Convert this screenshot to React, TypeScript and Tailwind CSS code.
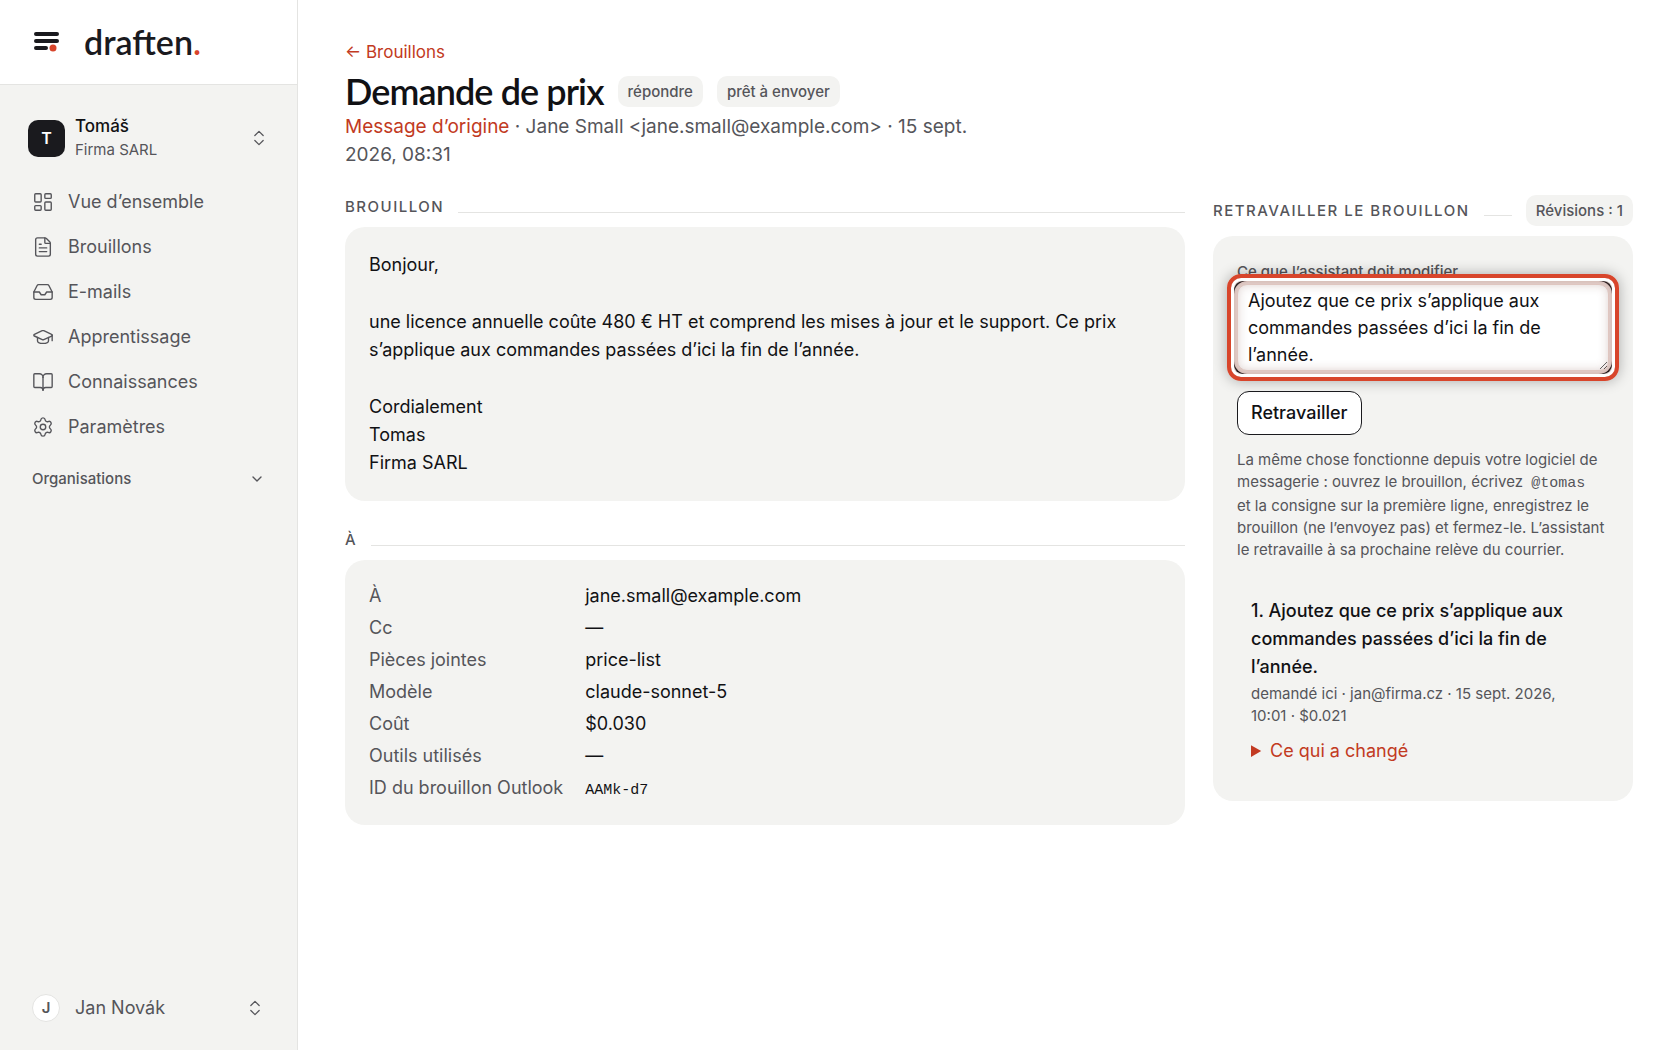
import {
  BookOpen,
  ChevronDown,
  ChevronsUpDown,
  FileText,
  GraduationCap,
  Inbox,
  LayoutDashboard,
  Settings,
} from "lucide-react";
import type { ReactNode } from "react";

const navItems = [
  { label: "Vue d’ensemble", icon: LayoutDashboard },
  { label: "Brouillons", icon: FileText },
  { label: "E-mails", icon: Inbox },
  { label: "Apprentissage", icon: GraduationCap },
  { label: "Connaissances", icon: BookOpen },
  { label: "Paramètres", icon: Settings },
];

const details = [
  { label: "À", value: "jane.small@example.com" },
  { label: "Cc", value: "—" },
  { label: "Pièces jointes", value: "price-list" },
  { label: "Modèle", value: "claude-sonnet-5" },
  { label: "Coût", value: "$0.030" },
  { label: "Outils utilisés", value: "—" },
  { label: "ID du brouillon Outlook", value: "AAMk-d7", mono: true },
];

function Logo() {
  return (
    <a href="#" className="flex items-center gap-6">
      <svg width="28" height="22" viewBox="0 0 28 22" fill="none">
        <path d="M4 3h21M4 10h21M4 17h10" stroke="#1a1a1e" strokeWidth="4" strokeLinecap="round" />
        <circle cx="21" cy="17" r="3.5" fill="#d8452b" />
      </svg>
      <span className="font-['Lato',sans-serif] text-[34px] leading-10 font-semibold text-[#1a1a1e]">
        draften<span className="text-[#d8452b]">.</span>
      </span>
    </a>
  );
}

function Sidebar() {
  return (
    <aside className="flex w-[298px] shrink-0 flex-col border-r border-[#e4e4e2] bg-[#f3f3f1]">
      <div className="flex h-[85px] items-center border-b border-[#e4e4e2] bg-white px-8">
        <Logo />
      </div>

      <button className="mx-7 mt-[29px] flex items-center gap-2.5 text-left">
        <span className="flex size-[37px] items-center justify-center rounded-[10px] bg-[#1a1a1e] text-base font-semibold text-white">
          T
        </span>
        <span className="flex-1">
          <span className="block text-[17px] leading-6 font-medium text-[#111114]">Tomáš</span>
          <span className="block text-[15px] leading-6 text-[#55555a]">Firma SARL</span>
        </span>
        <ChevronsUpDown className="size-5 text-[#55555a]" strokeWidth={1.5} />
      </button>

      <nav className="mt-[17px] flex flex-col px-8">
        {navItems.map(({ label, icon: Icon }) => (
          <a key={label} href="#" className="flex h-[45px] items-center gap-3.5 text-lg text-[#55555a]">
            <Icon className="size-[22px]" strokeWidth={1.5} />
            {label}
          </a>
        ))}
      </nav>

      <button className="mx-8 mt-[18px] flex items-center justify-between text-[15px] leading-6 font-medium text-[#55555a]">
        Organisations
        <ChevronDown className="size-4" />
      </button>

      <button className="mx-8 mt-auto mb-7 flex items-center gap-[15px] text-lg leading-7 text-[#55555a]">
        <span className="flex size-7 items-center justify-center rounded-full border border-[#e4e4e2] bg-white text-[15px] font-semibold">
          J
        </span>
        <span className="flex-1 text-left">Jan Novák</span>
        <ChevronsUpDown className="size-5" strokeWidth={1.5} />
      </button>
    </aside>
  );
}

function Badge({ children }: { children: ReactNode }) {
  return (
    <span className="rounded-[10px] bg-[#f3f3f1] px-2.5 py-1 text-[15px] leading-[23px] font-medium whitespace-nowrap text-[#55555a]">
      {children}
    </span>
  );
}

function SectionTitle({ children, badge }: { children: ReactNode; badge?: ReactNode }) {
  return (
    <div className="flex items-center gap-3.5">
      <h2 className="text-[15px] leading-6 font-medium tracking-widest whitespace-nowrap text-[#55555a] uppercase">
        {children}
      </h2>
      <div className="mt-2.5 h-px flex-1 bg-[#e4e4e2]" />
      {badge}
    </div>
  );
}

function DraftColumn() {
  return (
    <div className="flex flex-col">
      <SectionTitle>Brouillon</SectionTitle>
      <div className="mt-2 space-y-[29px] rounded-[20px] bg-[#f3f3f1] p-6 text-lg leading-7">
        <p>Bonjour,</p>
        <p>
          une licence annuelle coûte 480 € HT et comprend les mises à jour et le support. Ce prix s’applique
          aux commandes passées d’ici la fin de l’année.
        </p>
        <p>
          Cordialement
          <br />
          Tomas
          <br />
          Firma SARL
        </p>
      </div>

      <div className="mt-[27px]">
        <SectionTitle>À</SectionTitle>
      </div>
      <dl className="mt-2 grid grid-cols-[max-content_1fr] items-baseline gap-x-[22px] gap-y-1 rounded-[20px] bg-[#f3f3f1] px-6 pt-[22px] pb-5 text-lg leading-7">
        {details.map(({ label, value, mono }) => (
          <div key={label} className="contents">
            <dt className="text-[#55555a]">{label}</dt>
            <dd className={mono ? "font-['Liberation_Mono',monospace] text-[15px]" : ""}>{value}</dd>
          </div>
        ))}
      </dl>
    </div>
  );
}

function ReworkColumn() {
  return (
    <div>
      <SectionTitle badge={<Badge>Révisions : 1</Badge>}>Retravailler le brouillon</SectionTitle>
      <div className="mt-2.5 rounded-[20px] bg-[#f3f3f1] px-6 pt-6 pb-9">
        <label htmlFor="instruction" className="block text-[15px] leading-6 font-medium text-[#55555a]">
          Ce que l’assistant doit modifier
        </label>
        <div className="relative rounded-md shadow-[0_0_0_3px_#1a1a1e]">
          <textarea
            id="instruction"
            rows={3}
            className="block w-full rounded-[10px] border border-[#f0dcd7] bg-white px-2.5 py-0.5 text-lg leading-[27px] shadow-[0_0_0_3px_#f3e4e0]"
            defaultValue="Ajoutez que ce prix s’applique aux commandes passées d’ici la fin de l’année."
          />
          {/* focus highlight around the field */}
          <div className="pointer-events-none absolute -inset-2.5 rounded-[14px] border-4 border-[#d8452b] shadow-[0_0_14px_rgba(0,0,0,0.3),inset_0_0_0_3px_#fff,inset_0_0_12px_5px_rgba(100,40,30,0.3)]" />
        </div>
        <button className="mt-5 rounded-xl border border-[#1a1a1e] bg-white px-[13px] py-2 text-lg leading-[26px] font-medium">
          Retravailler
        </button>
        <p className="mt-3.5 text-[15px] leading-[22px] text-[#55555a]">
          La même chose fonctionne depuis votre logiciel de messagerie : ouvrez le brouillon, écrivez{" "}
          <code className="pr-2 pl-1 font-['Liberation_Mono',monospace] text-[15px]">@tomas</code> et la
          consigne sur la première ligne, enregistrez le brouillon (ne l’envoyez pas) et fermez-le.
          L’assistant le retravaille à sa prochaine relève du courrier.
        </p>
        <ol className="mt-9 px-3.5">
          <li>
            <p className="text-lg leading-7 font-medium">
              1. Ajoutez que ce prix s’applique aux commandes passées d’ici la fin de l’année.
            </p>
            <p className="mt-0.5 text-[15px] leading-[22px] text-[#55555a]">
              demandé ici · jan@firma.cz · 15 sept. 2026, 10:01 · $0.021
            </p>
            <details className="mt-2.5 text-lg leading-7">
              <summary className="text-[#c23a22]">Ce qui a changé</summary>
            </details>
          </li>
        </ol>
      </div>
    </div>
  );
}

export default function App() {
  return (
    <div className="flex min-h-screen bg-white font-['Inter',sans-serif] text-[#111114]">
      <Sidebar />
      <main className="flex-1 px-[47px] pt-[38px]">
        <header className="max-w-[640px]">
          <a href="#" className="block text-[17px] leading-7 text-[#c23a22]">
            ← Brouillons
          </a>
          <div className="mt-1 flex items-center gap-3.5">
            <h1 className="font-['Lato',sans-serif] text-[36px] leading-[43px] font-semibold tracking-tight">
              Demande de prix
            </h1>
            <Badge>répondre</Badge>
            <Badge>prêt à envoyer</Badge>
          </div>
          <p className="text-[19px] leading-7 text-[#55555a]">
            <a href="#" className="text-[#c23a22]">
              Message d’origine
            </a>{" "}
            · Jane Small &lt;jane.small@example.com&gt; · 15 sept. 2026, 08:31
          </p>
        </header>
        <div className="mt-[26px] grid grid-cols-[2fr_1fr] items-start gap-7">
          <DraftColumn />
          <ReworkColumn />
        </div>
      </main>
    </div>
  );
}
